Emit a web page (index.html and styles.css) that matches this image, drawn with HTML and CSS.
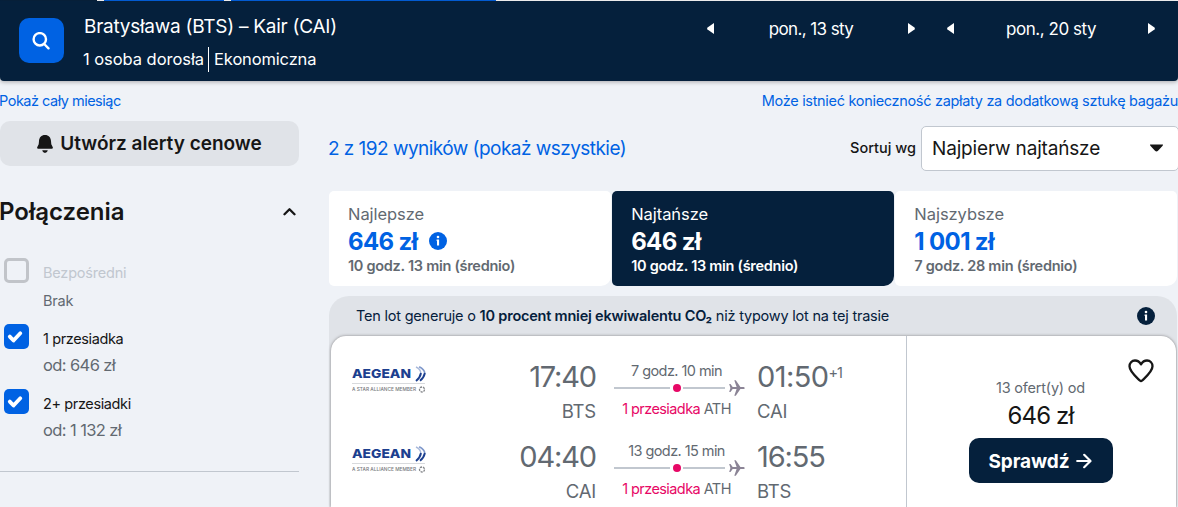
FILE: index.html
```html
<!DOCTYPE html>
<html lang="pl">

<head>
    <meta charset="UTF-8" />
    <meta name="viewport" content="width=device-width, initial-scale=1.0" />
    <link rel="stylesheet" href="styles.css">
    <title>Bratysława (BTS) – Kair (CAI)</title>
</head>

<body>

    <!-- icons used more than once -->
    <svg class="sprite">
        <symbol id="info" viewBox="0 0 18 18">
            <circle cx="9" cy="9" r="9" fill="currentColor" />
            <circle cx="9" cy="5" r="1.3" fill="#fff" />
            <path d="M7.6 7.4h2.5v6.1H8V8.9h-.4z" fill="#fff" />
        </symbol>
        <symbol id="check" viewBox="0 0 25 25">
            <path d="M5.8 12.6l3.700 3.900 6.800-7.200" fill="none" stroke="#fff" stroke-width="3.8" stroke-linecap="round" stroke-linejoin="round" />
        </symbol>
        <symbol id="left" viewBox="0 0 7 11">
            <path d="M7 0v11L.5 6.4Q-.2 5.5.5 4.6z" fill="#fff" />
        </symbol>
        <symbol id="right" viewBox="0 0 7 11">
            <path d="M0 0v11l6.500-4.600q.7-.9 0-1.800z" fill="#fff" />
        </symbol>
        <symbol id="plane" viewBox="0 0 16 16">
            <path d="M.2 3.900h1.300l2.200 3h3.900L5.300.3h1.500l4.600 6.600h3.200q1.200.3 1.200 1.100t-1.200 1.100h-3.200l-4.600 6.600H5.300l2.300-6.600H3.700l-2.200 3H.2L1.400 8z" fill="#8b8496" />
        </symbol>
        <symbol id="emblem" viewBox="0 0 11 16">
            <path d="M1 1q4.500 2.200 4.800 6" fill="none" stroke="#a9badb" stroke-width="1.400" />
            <path d="M4.200.8Q9.500 3.500 9.800 7.200" fill="none" stroke="#7f98cb" stroke-width="1.600" />
            <path d="M6 7q-.8 4.500-5 8M9.900 7Q9 11.500 5 14.800" fill="none" stroke="#1c3f8f" stroke-width="1.900" />
        </symbol>
    </svg>

    <div class="strip"></div>

    <header class="header">
        <button class="search-btn">
            <svg width="18" height="18" viewBox="0 0 18 18" fill="none" stroke="#fff" stroke-width="2.4">
                <circle cx="7.8" cy="7.300" r="6.200" />
                <path d="M12.200 12l4.300 4.300" stroke-linecap="round" />
            </svg>
        </button>
        <div class="trip">
            <div class="route"><span class="t-route">Bratysława (BTS) – Kair (CAI)</span></div>
            <div class="details">
                <span class="t-people">1 osoba dorosła</span>
                <span class="t-class">Ekonomiczna</span>
            </div>
        </div>
        <div class="dates">
            <div class="date">
                <svg width="7" height="11"><use href="#left" /></svg>
                <span class="t-date1">pon., 13 sty</span>
                <svg width="7" height="11"><use href="#right" /></svg>
            </div>
            <div class="date">
                <svg width="7" height="11"><use href="#left" /></svg>
                <span class="t-date2">pon., 20 sty</span>
                <svg width="7" height="11"><use href="#right" /></svg>
            </div>
        </div>
    </header>

    <div class="links">
        <a class="t-month">Pokaż cały miesiąc</a>
        <a class="t-bags">Może istnieć konieczność zapłaty za dodatkową sztukę bagażu</a>
    </div>

    <div class="page">
        <!-- filters -->
        <aside class="sidebar">
            <button class="alert-btn">
                <svg width="16" height="18" viewBox="0 0 16 18" fill="#161616">
                    <path d="M8 0C4.300 0 2.200 2.600 2 6L1.700 9.200.2 12.200Q-.2 13.600 1.200 13.800H14.800Q16.200 13.600 15.800 12.200L14.300 9.200 14 6C13.800 2.600 11.700 0 8 0zM5.200 15.200h5.600Q10.300 18 8 18T5.200 15.200z" />
                </svg>
                <span>Utwórz alerty cenowe</span>
            </button>

            <div class="filter-head">
                <h2>Połączenia</h2>
                <svg width="13" height="9" viewBox="0 0 13 9">
                    <path d="M1.500 7.200l5-5 5 5" fill="none" stroke="#161616" stroke-width="2.300" stroke-linecap="round" stroke-linejoin="round" />
                </svg>
            </div>

            <div class="option disabled">
                <div class="box"></div>
                <div class="option-text">
                    <span class="option-name">Bezpośredni</span>
                    <span class="option-price">Brak</span>
                </div>
            </div>
            <div class="option">
                <div class="box checked"><svg width="25" height="25"><use href="#check" /></svg></div>
                <div class="option-text">
                    <span class="option-name">1 przesiadka</span>
                    <span class="option-price">od: 646 zł</span>
                </div>
            </div>
            <div class="option">
                <div class="box checked"><svg width="25" height="25"><use href="#check" /></svg></div>
                <div class="option-text">
                    <span class="option-name">2+ przesiadki</span>
                    <span class="option-price">od: 1 132 zł</span>
                </div>
            </div>
        </aside>

        <!-- results -->
        <main class="main">
            <div class="toolbar">
                <a class="count">2 z 192 wyników (pokaż wszystkie)</a>
                <span class="sort-label">Sortuj wg</span>
                <div class="select">
                    <span>Najpierw najtańsze</span>
                    <svg width="13" height="8" viewBox="0 0 13 8">
                        <path d="M0 .5h13q0 1-.8 1.700L8 6.700q-1.500 1.400-3 0L.8 2.200Q0 1.500 0 .5z" fill="#161616" />
                    </svg>
                </div>
            </div>

            <div class="tabs">
                <div class="tab">
                    <span class="tab-name">Najlepsze</span>
                    <div class="tab-price">
                        <span>646 zł</span>
                        <svg width="18" height="18"><use href="#info" /></svg>
                    </div>
                    <span class="tab-time">10 godz. 13 min (średnio)</span>
                </div>
                <div class="tab active">
                    <span class="tab-name">Najtańsze</span>
                    <div class="tab-price"><span>646 zł</span></div>
                    <span class="tab-time">10 godz. 13 min (średnio)</span>
                </div>
                <div class="tab">
                    <span class="tab-name">Najszybsze</span>
                    <div class="tab-price"><span>1 001 zł</span></div>
                    <span class="tab-time">7 godz. 28 min (średnio)</span>
                </div>
            </div>

            <div class="result">
                <div class="eco">
                    <span>Ten lot generuje o <b>10 procent mniej ekwiwalentu CO₂</b> niż typowy lot na tej trasie</span>
                    <svg width="18" height="18"><use href="#info" /></svg>
                </div>
                <div class="ticket">
                    <div class="legs">
                        <div class="leg">
                            <svg class="logo" width="74" height="28" viewBox="0 0 74 28">
                                <text x="0" y="13" class="logo-name" textLength="59" lengthAdjust="spacingAndGlyphs">AEGEAN</text>
                                <use href="#emblem" x="63" y="1" width="11" height="16" />
                                <path d="M0 18.500h73" stroke="#d8dadd" />
                                <text x="0" y="26" class="logo-sub" textLength="64" lengthAdjust="spacingAndGlyphs">A STAR ALLIANCE MEMBER</text>
                                <circle cx="70" cy="24.500" r="2.500" fill="none" stroke="#85878b" stroke-width="1.300" stroke-dasharray="2.200 .9" />
                            </svg>
                            <div class="depart">
                                <span class="time">17:40</span>
                                <span class="airport">BTS</span>
                            </div>
                            <div class="stops">
                                <span>7 godz. 10 min</span>
                                <div class="line"><i></i><b></b><i></i><svg width="16" height="16"><use href="#plane" /></svg></div>
                                <span><em>1 przesiadka</em> ATH</span>
                            </div>
                            <div class="arrive">
                                <span class="time next-day">01:50<sup>+1</sup></span>
                                <span class="airport">CAI</span>
                            </div>
                        </div>
                        <div class="leg">
                            <svg class="logo" width="74" height="28" viewBox="0 0 74 28">
                                <text x="0" y="13" class="logo-name" textLength="59" lengthAdjust="spacingAndGlyphs">AEGEAN</text>
                                <use href="#emblem" x="63" y="1" width="11" height="16" />
                                <path d="M0 18.500h73" stroke="#d8dadd" />
                                <text x="0" y="26" class="logo-sub" textLength="64" lengthAdjust="spacingAndGlyphs">A STAR ALLIANCE MEMBER</text>
                                <circle cx="70" cy="24.500" r="2.500" fill="none" stroke="#85878b" stroke-width="1.300" stroke-dasharray="2.200 .9" />
                            </svg>
                            <div class="depart">
                                <span class="time">04:40</span>
                                <span class="airport">CAI</span>
                            </div>
                            <div class="stops">
                                <span>13 godz. 15 min</span>
                                <div class="line"><i></i><b></b><i></i><svg width="16" height="16"><use href="#plane" /></svg></div>
                                <span><em>1 przesiadka</em> ATH</span>
                            </div>
                            <div class="arrive">
                                <span class="time">16:55</span>
                                <span class="airport">BTS</span>
                            </div>
                        </div>
                    </div>
                    <div class="offer">
                        <svg class="heart" width="26" height="24" viewBox="0 0 26 24">
                            <path d="M13 5.300C11.300 2.500 9.300 1.500 7 1.500 3.700 1.500 1.500 4 1.500 7.300c0 5.200 6.300 10.300 10.300 14.200q1.200 1.100 2.400 0C18.200 17.600 24.500 12.500 24.500 7.300 24.500 4 22.300 1.500 19 1.500c-2.300 0-4.300 1-6 3.800z" fill="none" stroke="#161616" stroke-width="2.300" stroke-linejoin="round" />
                        </svg>
                        <span class="deals">13 ofert(y) od</span>
                        <span class="price">646 zł</span>
                        <button class="go-btn">
                            <span>Sprawdź</span>
                            <svg width="16" height="16" viewBox="0 0 16 16" fill="none" stroke="#fff" stroke-width="2.200" stroke-linecap="round" stroke-linejoin="round">
                                <path d="M1.200 8h13M8.200 1.800L14.500 8l-6.300 6.200" />
                            </svg>
                        </button>
                    </div>
                </div>
            </div>
        </main>
    </div>

</body>

</html>
```
FILE: styles.css
```css
:root {
    --navy: #05203c;
    --blue: #0062e3;
    --page: #eff2f7;
    --grey: #e0e3e8;
    --text: #161616;
    --muted: #626971;
    --line: #c1c7cf;
    --pink: #e70866;
}

* {
    box-sizing: border-box;
}

body {
    background-color: var(--page);
    color: var(--text);
    font-family: Inter, 'Liberation Sans', sans-serif;
    font-size: 15px;
    margin: 0;
    width: 1178px;
    height: 507px;
    overflow: hidden;
}

span,
a {
    white-space: nowrap;
}

svg {
    display: block;
    flex: none;
}

button {
    border: 0;
    padding: 0;
    font-family: inherit;
    cursor: pointer;
    display: flex;
    align-items: center;
    justify-content: center;
}

.sprite {
    position: absolute;
    width: 0;
    height: 0;
}

/* the tab underlines that peek out above the header */
.strip {
    height: 1px;
    background: linear-gradient(to right, var(--navy) 97px, #fff 97px 104px, var(--blue) 104px 224px, #fff 224px 231px, var(--blue) 231px 496px, #fff 496px);
}

.header {
    display: flex;
    height: 80px;
    background-color: var(--navy);
    color: #fff;
    border-radius: 0 0 4px 4px;
    box-shadow: 0 1px 4px rgba(37, 32, 31, 0.35);
}

.search-btn {
    width: 45px;
    height: 45px;
    margin: 17px 20px 0 19px;
    padding-right: 2px;
    border-radius: 10px;
    background-color: var(--blue);
}

.trip {
    flex: 1;
    padding-top: 13px;
}

.route {
    font-size: 19px;
    line-height: 26px;
    letter-spacing: -0.26px;
}

.details {
    display: flex;
    margin: 7px 0 0 -1px;
    font-size: 16.5px;
    line-height: 25px;
    letter-spacing: -0.05px;
}

.t-class {
    border-left: 1px solid #fff;
    padding-left: 5px;
    margin-left: 4px;
    letter-spacing: -0.15px;
}

.dates {
    display: flex;
    gap: 32px;
    padding: 16px 23px 0 0;
}

.date {
    display: flex;
    justify-content: space-between;
    align-items: center;
    width: 208px;
    height: 24px;
    font-size: 17px;
    letter-spacing: -0.6px;
}

.date svg {
    margin-top: -2px;
}

.t-date2 {
    letter-spacing: -0.45px;
}

.links {
    display: flex;
    justify-content: space-between;
    height: 40px;
    line-height: 40px;
    color: var(--blue);
    font-size: 14.5px;
}

.t-month {
    margin-left: -1px;
    letter-spacing: -0.5px;
}

.t-bags {
    letter-spacing: -0.31px;
}

.page {
    display: flex;
    gap: 30px;
}

.sidebar {
    width: 299px;
    height: 351px;
    border-bottom: 1px solid var(--line);
}

.alert-btn {
    width: 299px;
    height: 45px;
    gap: 7px;
    border-radius: 10px;
    background-color: var(--grey);
    color: var(--text);
    font-size: 19px;
    font-weight: 600;
}

.filter-head {
    display: flex;
    justify-content: space-between;
    align-items: center;
    height: 32px;
    margin: 29px 3px 28px -1px;
}

.filter-head h2 {
    margin: 0;
    font-size: 24px;
    font-weight: 600;
}

.option {
    display: flex;
    gap: 14px;
    height: 65px;
    padding: 3px 0 0 4px;
}

.box {
    width: 25px;
    height: 25px;
    border: 3px solid #c1c4c9;
    border-radius: 5px;
}

.box.checked {
    border: 0;
    background-color: var(--blue);
}

.option-text {
    display: flex;
    flex-direction: column;
    padding-top: 2px;
}

.option-name {
    font-size: 14.5px;
    line-height: 26px;
    letter-spacing: -0.38px;
}

.option-price {
    font-size: 16.5px;
    line-height: 27px;
    letter-spacing: -0.6px;
    color: var(--muted);
}

.disabled {
    height: 66px;
}

.disabled .option-name {
    color: #c1c7cf;
    letter-spacing: -0.2px;
}

.disabled .option-price {
    font-size: 14.5px;
    line-height: 30px;
    letter-spacing: -0.2px;
}

.main {
    width: 849px;
}

.toolbar {
    display: flex;
    align-items: center;
    height: 45px;
    margin: 5px 0 20px;
}

.count {
    flex: 1;
    margin-left: -1px;
    color: var(--blue);
    font-size: 19px;
    letter-spacing: -0.54px;
}

.sort-label {
    font-size: 14.5px;
    font-weight: 500;
    padding-bottom: 2px;
}

.select {
    display: flex;
    align-items: center;
    justify-content: space-between;
    width: 258px;
    height: 45px;
    margin: 0 -1px 0 5px;
    padding: 0 15px 1px 10px;
    border: 1px solid var(--line);
    border-radius: 5px;
    background-color: #fff;
    font-size: 19px;
    letter-spacing: -0.17px;
}

.tabs {
    display: flex;
    gap: 1.5px;
    width: 848px;
}

.tab {
    flex: 1;
    display: flex;
    flex-direction: column;
    height: 95px;
    padding: 13px 0 0 19px;
    border-radius: 5px 5px 10px 5px;
    background-color: #fff;
    color: var(--muted);
}

.tab-name {
    font-size: 16.5px;
    line-height: 21px;
    letter-spacing: -0.05px;
}

.tab-price {
    display: flex;
    align-items: center;
    gap: 12px;
    height: 32px;
    color: var(--blue);
    font-size: 24px;
    font-weight: 700;
    letter-spacing: -0.65px;
}

.tab-time {
    font-size: 14.5px;
    font-weight: 600;
    line-height: 17px;
    letter-spacing: -0.28px;
}

.tab.active,
.active .tab-price {
    background-color: var(--navy);
    color: #fff;
}

.result {
    width: 848px;
    margin-top: 10px;
    padding: 0 1px 0 2px;
    border-radius: 20px 20px 0 0;
    background-color: var(--grey);
}

.eco {
    display: flex;
    align-items: center;
    justify-content: space-between;
    height: 40px;
    padding: 0 21px 0 25px;
    color: var(--navy);
    font-size: 14.5px;
    letter-spacing: -0.21px;
}

.eco span {
    padding-bottom: 2px;
}

.eco b {
    font-weight: 600;
}

.ticket {
    display: flex;
    height: 171px;
    border-radius: 15px 15px 0 0;
    background-color: #fff;
    box-shadow: 0 0 3px rgba(37, 32, 31, 0.5);
}

.legs {
    width: 576px;
    padding: 24px 0 0 21px;
    border-right: 1px solid var(--line);
    color: var(--muted);
}

.leg {
    display: flex;
    height: 80px;
}

.logo {
    margin-top: 5px;
}

.logo-name {
    font: 800 12px Inter, sans-serif;
    fill: #1c3f8f;
}

.logo-sub {
    font: 500 4.5px Inter, sans-serif;
    fill: #75777b;
}

.depart,
.arrive {
    display: flex;
    flex-direction: column;
}

.depart {
    align-items: flex-end;
    width: 170px;
}

.arrive {
    padding-left: 12px;
}

.time {
    font-size: 29px;
    line-height: 34px;
    letter-spacing: -1.15px;
}

.next-day {
    letter-spacing: -0.6px;
}

.time sup {
    font-size: 14.5px;
    line-height: 0;
    vertical-align: 9px;
    letter-spacing: -1px;
}

.airport {
    font-size: 18.5px;
    line-height: 34px;
    letter-spacing: -0.2px;
}

.stops {
    display: flex;
    flex-direction: column;
    align-items: center;
    width: 131px;
    margin-left: 18px;
    padding-top: 1px;
    font-size: 14.5px;
    line-height: 20px;
    letter-spacing: -0.57px;
}

/* the text is centred on the line, not on the line and the plane */
.stops span {
    margin-right: 6px;
}

.stops em {
    font-style: normal;
    color: var(--pink);
}

.line {
    display: flex;
    align-items: center;
    width: 131px;
    height: 16px;
    margin: -1px 0 3px;
}

.line i {
    height: 2px;
    width: 56px;
    background-color: var(--line);
}

.line i + b + i {
    width: 42px;
}

.line b {
    width: 8px;
    height: 8px;
    margin: 0 2.5px;
    border-radius: 50%;
    background-color: var(--pink);
}

.line svg {
    margin-left: 4px;
}

.offer {
    flex: 1;
    display: flex;
    flex-direction: column;
    align-items: center;
    padding: 23px 2px 0 0;
}

.heart {
    align-self: flex-end;
    margin-right: 20px;
}

.deals {
    margin-top: -5px;
    color: var(--muted);
    font-size: 14.5px;
    line-height: 20px;
    letter-spacing: -0.2px;
}

.price {
    padding-top: 1px;
    font-size: 24px;
    line-height: 34px;
    letter-spacing: -0.85px;
}

.go-btn {
    width: 144px;
    height: 45px;
    margin-top: 5px;
    gap: 7px;
    border-radius: 10px;
    background-color: var(--navy);
    color: #fff;
    font-size: 19px;
    font-weight: 700;
    letter-spacing: -0.1px;
}

.go-btn span {
    padding-top: 1px;
}
```
